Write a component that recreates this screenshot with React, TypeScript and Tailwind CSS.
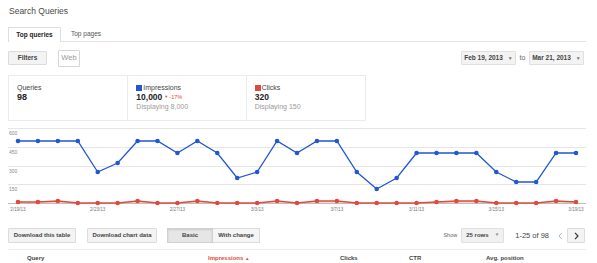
import React from "react";

const XS = Array.from({ length: 29 }, (_, i) => 18 + i * (558 / 28));
const BLUE = [141,141,141,141,172,163,141,141,153,141,153,178,172,141,153,141,141,172,189,178,153,153,153,153,172,182,182,153,153];
const RED = [202,202,201,203,203,203,201,203,203,201,203,203,203,201,203,201,201,203,203,203,203,202,201,201,203,203,203,201,202];
const DATES = ["2/19/13","2/23/13","2/27/13","3/3/13","3/7/13","3/11/13","3/15/13","3/19/13"];

function Caret() {
  return <span className="ml-[5px] text-[5px] text-[#777] leading-none">▼</span>;
}

function Chart() {
  const bluePts = XS.map((x, i) => `${x},${BLUE[i]}`).join(" ");
  const redPts = XS.map((x, i) => `${x},${RED[i]}`).join(" ");
  const area = `${XS[0]},203 ${redPts} ${XS[28]},203`;
  return (
    <svg width="597" height="95" viewBox="0 121 597 95" className="block">
      {[128, 147, 166, 184].map((y) => (
        <line key={y} x1="8" x2="586" y1={y + 0.5} y2={y + 0.5} stroke="#e6e6e6" strokeWidth="1" />
      ))}
      {[["600", 135], ["450", 153.5], ["300", 172.5], ["150", 190.5]].map(([t, y]) => (
        <text key={t} x="9" y={y} fontSize="5" fill="#8a8a8a" fontFamily="Liberation Sans, Arial, sans-serif">{t}</text>
      ))}
      <polygon points={area} fill="#e8a59c" opacity="0.45" />
      <line x1="8" x2="586" y1="203.5" y2="203.5" stroke="#bdbdbd" strokeWidth="1" />
      <polyline points={bluePts} fill="none" stroke="#2157d3" strokeWidth="1.3" />
      {XS.map((x, i) => (
        <circle key={"b" + i} cx={x} cy={BLUE[i]} r="2.3" fill="#2157d3" />
      ))}
      <polyline points={redPts} fill="none" stroke="#de4b3c" strokeWidth="1.3" />
      {XS.map((x, i) => (
        <circle key={"r" + i} cx={x} cy={RED[i]} r="2.3" fill="#de4b3c" />
      ))}
      {DATES.map((d, k) => (
        <text key={d} x={XS[k * 4]} y="210.5" fontSize="4.6" fill="#777" textAnchor="middle" fontFamily="Liberation Sans, Arial, sans-serif">{d}</text>
      ))}
    </svg>
  );
}

export default function App() {
  return (
    <div className="w-[597px] h-[263px] overflow-hidden bg-white text-[#444] font-['Liberation_Sans',Arial,sans-serif]">
      <div className="h-[27px] pt-[6px] pl-[9px] text-[8.5px] leading-[10px] text-[#4a4a4a]">Search Queries</div>

      <div className="ml-[8px] mr-[11px] h-[15px] flex items-end border-b border-[#e3e3e3]">
        <div className="w-[53px] h-[15px] -mb-px border border-b-0 border-[#dedede] bg-white flex items-center justify-center text-[6.5px] font-bold text-[#222]">
          Top queries
        </div>
        <div className="h-[14px] pl-[10px] flex items-center text-[6.5px] text-[#555]">Top pages</div>
      </div>

      <div className="mt-[7px] h-[18px] flex items-center">
        <div className="ml-[8px] w-[39px] h-[14px] bg-[#f3f3f3] border border-[#dcdcdc] rounded-[1px] flex items-center justify-center text-[6.5px] font-bold text-[#444]">
          Filters
        </div>
        <div className="ml-[11px] w-[22px] h-[17px] border border-[#d6d6d6] rounded-[1px] flex items-center justify-center text-[7.5px] text-[#999]">
          Web
        </div>
        <div className="ml-auto mr-[13px] flex items-center">
          <div className="w-[55px] h-[14px] bg-[#f3f3f3] border border-[#e0e0e0] rounded-[1px] flex items-center justify-center text-[6.5px] font-bold text-[#444]">
            Feb 19, 2013<Caret />
          </div>
          <div className="w-[13px] text-center text-[7px] text-[#666]">to</div>
          <div className="w-[55px] h-[14px] bg-[#f3f3f3] border border-[#e0e0e0] rounded-[1px] flex items-center justify-center text-[6.5px] font-bold text-[#444]">
            Mar 21, 2013<Caret />
          </div>
        </div>
      </div>

      <div className="mt-[8px] ml-[8px] w-[358px] h-[46px] border border-[#ebebeb] flex">
        <div className="w-[120px] border-r border-[#ebebeb] pl-[8px] pt-[7px]">
          <div className="text-[7px] leading-[9px] text-[#444]">Queries</div>
          <div className="text-[9px] leading-[10px] font-bold text-[#222]">98</div>
        </div>
        <div className="w-[119px] border-r border-[#ebebeb] pl-[8px] pt-[7px]">
          <div className="flex items-center text-[7px] leading-[9px] text-[#444]">
            <span className="w-[6px] h-[6px] bg-[#2157d3] mr-[1px]" />Impressions
          </div>
          <div className="flex items-center h-[10px]">
            <span className="text-[8.5px] leading-[10px] font-bold text-[#222]">10,000</span>
            <span className="ml-[2px] text-[4px] text-[#dd4b39]">▼</span>
            <span className="ml-[1px] text-[5.5px] text-[#dd4b39]">-17%</span>
          </div>
          <div className="text-[7px] leading-[9px] text-[#9a9a9a]">Displaying 8,000</div>
        </div>
        <div className="w-[119px] pl-[8px] pt-[7px]">
          <div className="flex items-center text-[7px] leading-[9px] text-[#444]">
            <span className="w-[6px] h-[6px] bg-[#de4b3c] mr-[1px]" />Clicks
          </div>
          <div className="text-[8.5px] leading-[10px] font-bold text-[#222]">320</div>
          <div className="text-[7px] leading-[9px] text-[#9a9a9a]">Displaying 150</div>
        </div>
      </div>

      <Chart />

      <div className="mt-[12px] h-[15px] flex items-center pl-[8px] pr-[12px]">
        <div className="w-[68px] h-[15px] bg-[#f3f3f3] border border-[#dcdcdc] rounded-[1px] flex items-center justify-center text-[6px] font-bold text-[#444]">
          Download this table
        </div>
        <div className="ml-[11px] w-[70px] h-[15px] bg-[#f3f3f3] border border-[#dcdcdc] rounded-[1px] flex items-center justify-center text-[6px] font-bold text-[#444]">
          Download chart data
        </div>
        <div className="ml-[10px] flex">
          <div className="w-[46px] h-[15px] bg-[#e6e6e6] border border-[#d0d0d0] shadow-[inset_0_1px_2px_rgba(0,0,0,0.12)] flex items-center justify-center text-[6px] font-bold text-[#444]">
            Basic
          </div>
          <div className="w-[47px] h-[15px] bg-[#f5f5f5] border border-l-0 border-[#dcdcdc] flex items-center justify-center text-[6px] font-bold text-[#444]">
            With change
          </div>
        </div>
        <div className="ml-auto flex items-center">
          <span className="text-[5.5px] text-[#666] mr-[4px]">Show</span>
          <div className="w-[43px] h-[15px] bg-[#f1f1f1] border border-[#e0e0e0] rounded-[1px] flex items-center pl-[4px] text-[6px] font-bold text-[#444]">
            25 rows<span className="ml-auto mr-[4px] text-[4.5px] text-[#888]">▼</span>
          </div>
          <span className="ml-[11px] text-[7.5px] text-[#444]">1-25 of 98</span>
          <div className="ml-[4px] w-[14px] h-[15px] flex items-center justify-center">
            <svg width="5" height="8" viewBox="0 0 5 8"><path d="M4 0.8 L1 4 L4 7.2" fill="none" stroke="#aaa" strokeWidth="0.9" /></svg>
          </div>
          <div className="w-[18px] h-[15px] bg-[#f3f3f3] border border-[#dcdcdc] rounded-[1px] flex items-center justify-center">
            <svg width="5" height="8" viewBox="0 0 5 8"><path d="M1 0.8 L4 4 L1 7.2" fill="none" stroke="#333" strokeWidth="1.2" /></svg>
          </div>
        </div>
      </div>

      <div className="mt-[6px] mx-[8px] w-[578px] border-t border-[#ebebeb] h-[18px] flex items-center text-[6px] font-bold text-[#444]">
        <div className="w-[200px] pl-[19px]">Query</div>
        <div className="w-[132px] text-[#dd4b39]">Impressions <span className="text-[4.5px]">▲</span></div>
        <div className="w-[69px]">Clicks</div>
        <div className="w-[77px]">CTR</div>
        <div>Avg. position</div>
      </div>
    </div>
  );
}
